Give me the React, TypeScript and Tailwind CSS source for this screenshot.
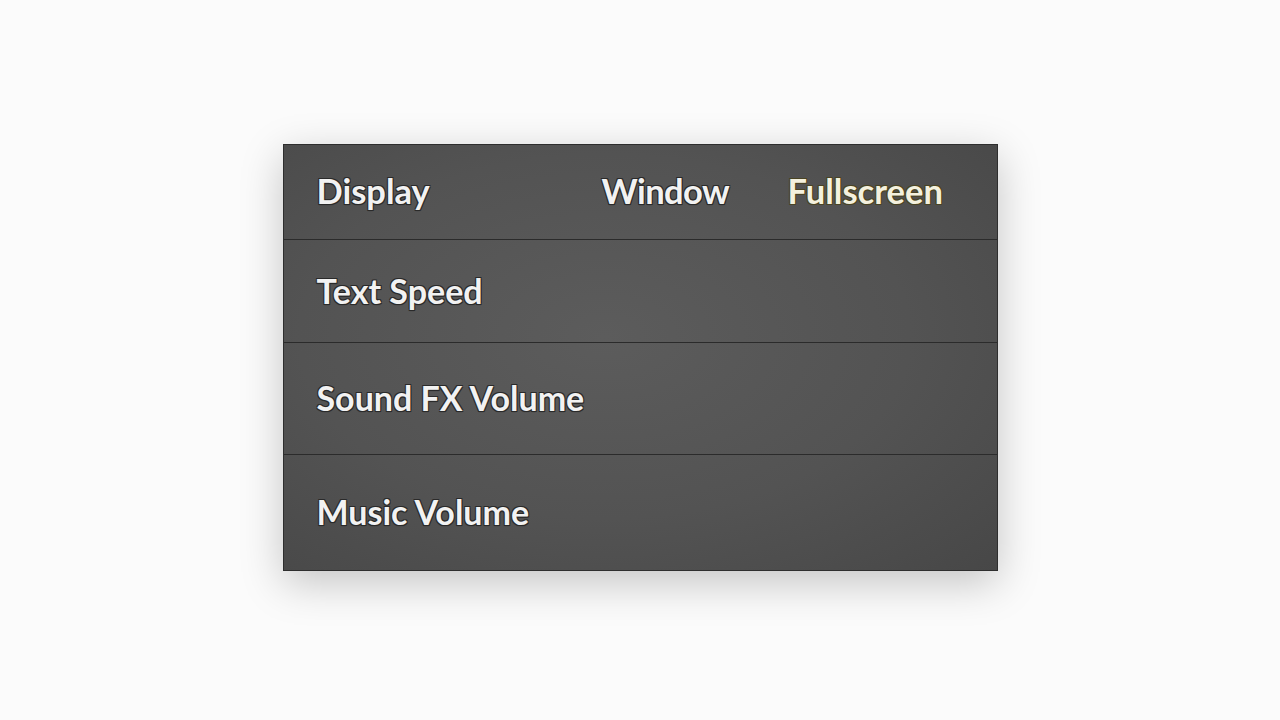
import React from 'react';

const rows = [
  { label: 'Text Speed', h: 'h-[103px]' },
  { label: 'Sound FX Volume', h: 'h-[112px]' },
  { label: 'Music Volume', h: 'h-[115px]' },
];

const outline =
  '[text-shadow:-1px_-1px_0_#2a2a2a,1px_-1px_0_#2a2a2a,-1px_1px_0_#2a2a2a,1px_1px_0_#2a2a2a,0_1px_1px_#222]';

export default function App() {
  return (
    <div className="w-[1280px] h-[720px] bg-[#fbfbfb] flex items-start justify-center pt-[144px] font-['Lato',sans-serif]">
      <div className="w-[715px] border border-[#2e2e2e] bg-[radial-gradient(ellipse_at_45%_45%,#5c5c5c_0%,#535353_55%,#474747_100%)] shadow-[0_12px_40px_rgba(0,0,0,0.22)] flex flex-col">
        <div className="h-[95px] grid grid-cols-[285px_186px_1fr] items-center pl-[33px] pb-[3px] border-b border-[#2b2b2b] text-[34.5px] font-bold">
          <span className={`text-[#f2f2f2] ${outline}`}>Display</span>
          <span className={`text-[#f2f2f2] tracking-[-0.6px] ${outline}`}>Window</span>
          <span className="text-[#f4f1de] [text-shadow:-1px_-1px_0_#4a4424,1px_-1px_0_#4a4424,-1px_1px_0_#4a4424,1px_1px_0_#4a4424]">
            Fullscreen
          </span>
        </div>
        {rows.map((r, i) => (
          <div
            key={r.label}
            className={`${r.h} flex items-center pl-[33px] pb-[2px] text-[34px] font-bold ${i < rows.length - 1 ? 'border-b border-[#2b2b2b]' : ''}`}
          >
            <span className={`text-[#f2f2f2] ${outline}`}>{r.label}</span>
          </div>
        ))}
      </div>
    </div>
  );
}
